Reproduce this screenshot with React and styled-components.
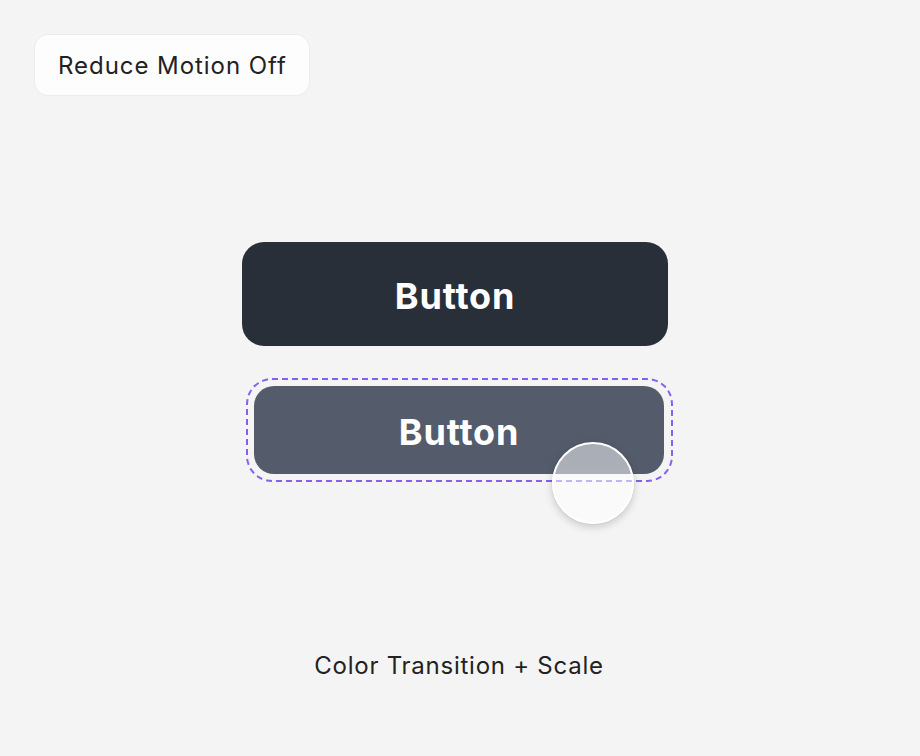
import styled, { createGlobalStyle } from 'styled-components';

const GlobalStyle = createGlobalStyle`
  html, body {
    margin: 0;
    padding: 0;
    background: #f4f4f4;
    font-family: Inter, "Liberation Sans", sans-serif;
  }
`;

const Page = styled.div`
  min-height: 756px;
  box-sizing: border-box;
  padding: 34px;
  display: flex;
  flex-direction: column;
`;

const Toggle = styled.button`
  align-self: flex-start;
  height: 62px;
  padding: 0 22px 0 23px;
  border: 1px solid #ececec;
  border-radius: 14px;
  background: #fdfdfd;
  color: #222;
  font-family: Inter, "Liberation Sans", sans-serif;
  font-size: 24px;
  letter-spacing: 0.95px;
  cursor: pointer;
`;

const Stage = styled.div`
  display: flex;
  flex-direction: column;
  align-items: center;
  margin-top: 146px;
  padding-right: 10px;
`;

const Btn = styled.button`
  width: ${(p) => p.$w}px;
  height: ${(p) => p.$h}px;
  padding: 4px 0 0;
  border: none;
  border-radius: ${(p) => p.$r}px;
  background: ${(p) => p.$bg};
  color: #fff;
  font-family: Inter, "Liberation Sans", sans-serif;
  font-weight: 700;
  font-size: 36px;
  letter-spacing: 0.8px;
  cursor: pointer;
`;

const FocusRing = styled.div`
  position: relative;
  margin-top: 32px;
  margin-left: 9px;
  padding: 6px 7px 6px 6px;
  border: 2px dashed #8460ee;
  border-radius: 26px;
  display: flex;
`;

const Touch = styled.span`
  position: absolute;
  left: 304px;
  top: 62px;
  width: 78px;
  height: 78px;
  border-radius: 50%;
  border: 2px solid #fff;
  background: linear-gradient(to bottom, rgba(255, 255, 255, 0.5), rgba(255, 255, 255, 0.55));
  box-shadow: 0 3px 8px rgba(0, 0, 0, 0.18), 0 0 0 1px rgba(0, 0, 0, 0.04);
  pointer-events: none;
`;

const Caption = styled.p`
  margin: 169px 0 0 8px;
  color: #222;
  font-size: 24px;
  letter-spacing: 0.75px;
`;

export default function App() {
  return (
    <>
      <GlobalStyle />
      <Page>
        <Toggle>Reduce Motion Off</Toggle>
        <Stage>
          <Btn $w={426} $h={104} $r={22} $bg="#292f38">
            Button
          </Btn>
          <FocusRing>
            <Btn $w={410} $h={88} $r={20} $bg="#545b6b">
              Button
            </Btn>
            <Touch />
          </FocusRing>
          <Caption>Color Transition + Scale</Caption>
        </Stage>
      </Page>
    </>
  );
}
